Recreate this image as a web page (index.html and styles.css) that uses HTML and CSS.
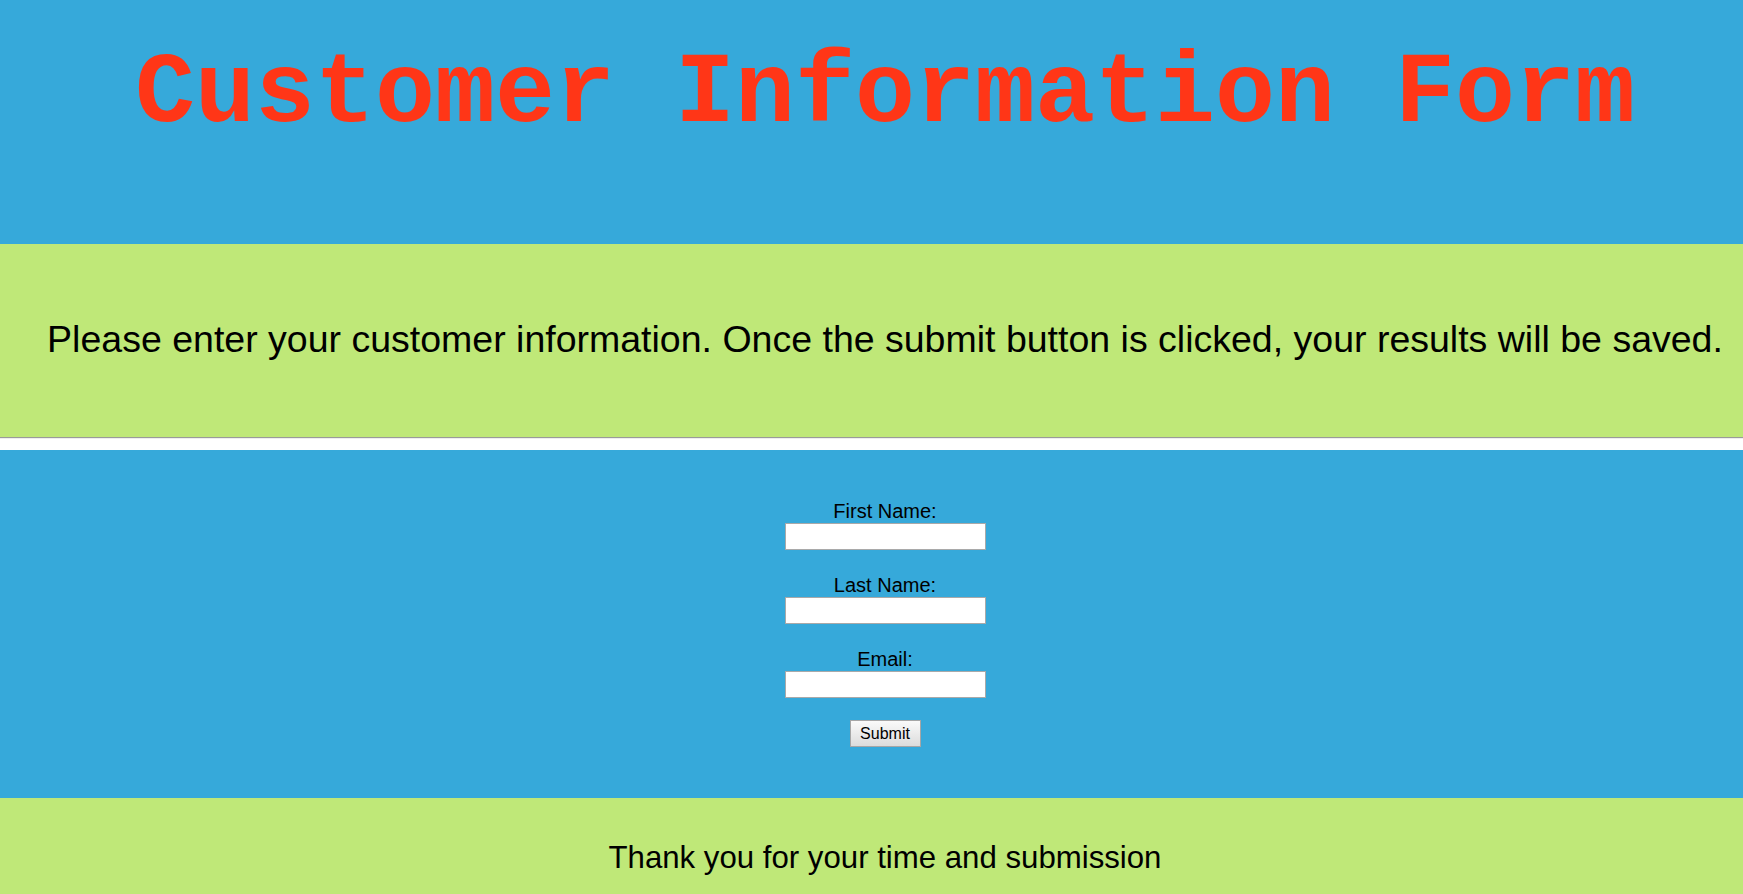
FILE: index.html
```html
<!DOCTYPE html>
<html>
<head>
<meta charset="utf-8">
<title>Customer Information Form</title>
<link rel="stylesheet" href="styles.css">
</head>
<body>
<header class="banner">
  <h1 class="title">Customer Information Form</h1>
</header>
<section class="intro">
  <p class="intro-text">Please enter your customer information. Once the submit button is clicked, your results will be saved.</p>
</section>
<hr class="divider">
<section class="form-area">
  <form class="form">
    <div class="field">
      <label class="label" for="fn">First Name:</label>
      <input class="input" id="fn" type="text">
    </div>
    <div class="field">
      <label class="label" for="ln">Last Name:</label>
      <input class="input" id="ln" type="text">
    </div>
    <div class="field">
      <label class="label" for="em">Email:</label>
      <input class="input" id="em" type="text">
    </div>
    <button class="submit" type="button">Submit</button>
  </form>
</section>
<footer class="thanks">
  <p class="thanks-text">Thank you for your time and submission</p>
</footer>
</body>
</html>
```
FILE: styles.css
```css
html, body {
  margin: 0;
  padding: 0;
}
body {
  font-family: "Liberation Sans", Arial, sans-serif;
  color: #000;
  background: #fff;
  overflow: hidden;
}
.banner {
  background: #36a9da;
  height: 244px;
  padding-left: 27px;
  box-sizing: border-box;
  text-align: center;
}
.title {
  margin: 0;
  padding-top: 45px;
  font-family: "Liberation Mono", "Courier New", monospace;
  font-weight: bold;
  font-size: 100px;
  line-height: 100px;
  color: #ff3617;
  white-space: nowrap;
}
.intro {
  background: #bfe878;
  height: 193px;
  padding: 75px 0 0 27px;
  box-sizing: border-box;
  text-align: center;
}
.intro-text {
  margin: 0;
  font-size: 37.5px;
  line-height: 40px;
  white-space: nowrap;
}
.divider {
  margin: 0 0 11px 0;
  border: 0;
  border-top: 1px solid #9a9a9a;
  border-bottom: 1px solid #eeeeee;
  height: 0;
}
.form-area {
  background: #36a9da;
  height: 348px;
  box-sizing: border-box;
  padding: 50px 0 0 27px;
}
.form {
  display: flex;
  flex-direction: column;
  align-items: center;
}
.field {
  display: flex;
  flex-direction: column;
  align-items: center;
  margin-bottom: 24px;
}
.field:last-of-type {
  margin-bottom: 22px;
}
.label {
  font-size: 20px;
  line-height: 23px;
}
.input {
  box-sizing: border-box;
  width: 201px;
  height: 27px;
  margin: 0;
  padding: 1px 2px;
  border: 1px solid #a9a9a9;
  background: #fff;
  font-size: 16px;
  font-family: "Liberation Sans", Arial, sans-serif;
}
.submit {
  box-sizing: border-box;
  height: 27px;
  width: 71px;
  margin: 0;
  padding: 0;
  font-family: "Liberation Sans", Arial, sans-serif;
  font-size: 16px;
  color: #000;
  border: 1px solid #a6a6a6;
  background: linear-gradient(#fafafa, #dcdcdc);
}
.thanks {
  background: #bfe878;
  height: 96px;
  padding-left: 27px;
  text-align: center;
}
.thanks-text {
  margin: 0;
  padding-top: 42px;
  font-size: 31.2px;
  line-height: 36px;
}
```
